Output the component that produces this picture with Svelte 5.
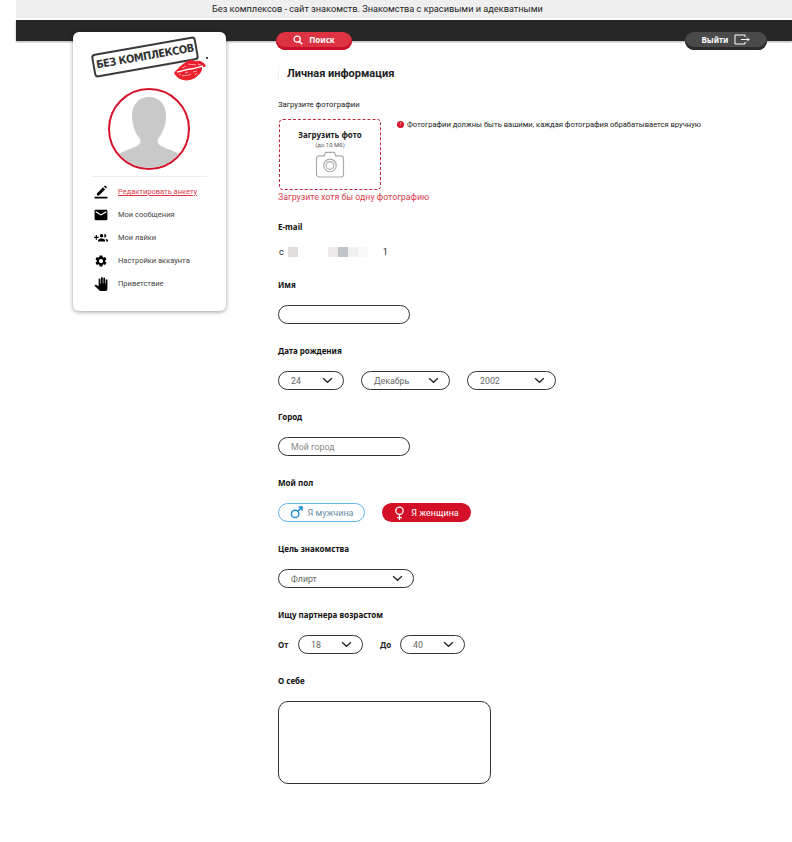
<script>
    const menu = [
        { label: "Редактировать анкету", icon: "edit", active: true },
        { label: "Мои сообщения", icon: "mail" },
        { label: "Мои лайки", icon: "group" },
        { label: "Настройки аккаунта", icon: "gear" },
        { label: "Приветствие", icon: "hand" },
    ];

    const paths = {
        edit: "M1 20h22v3H1zM5 14.500 15.500 4l3.500 3.500L8.500 18H5zM17 2.500l1.200-1.200a1 1 0 0 1 1.400 0l2.100 2.100a1 1 0 0 1 0 1.400L20.500 6z",
        mail: "M21 3H3C1.900 3 1 3.900 1 5v14c0 1.100.900 2 2 2h18c1.100 0 2-.900 2-2V5c0-1.100-.900-2-2-2zm0 4.500-9 5.500-9-5.500V5l9 5.500L21 5v2.500z",
        group: "M8 10H5V7H3v3H0v2h3v3h2v-3h3v-2zm10 1c1.660 0 2.990-1.340 2.990-3S19.660 5 18 5c-.320 0-.630.050-.910.140.570.810.900 1.790.900 2.860s-.340 2.040-.900 2.860c.280.090.590.140.910.140zm-5 0c1.660 0 2.990-1.340 2.990-3S14.660 5 13 5s-3 1.340-3 3 1.340 3 3 3zm6.620 2.160c.830.730 1.380 1.660 1.380 2.840v2h3v-2c0-1.540-2.370-2.490-4.380-2.840zM13 13c-2 0-6 1-6 3v2h12v-2c0-2-4-3-6-3z",
        gear: "M19.140 12.940c.040-.300.060-.610.060-.940 0-.320-.020-.640-.070-.940l2.030-1.580c.180-.140.230-.410.120-.610l-1.920-3.320c-.120-.220-.370-.290-.590-.220l-2.390.960c-.500-.380-1.030-.700-1.620-.940l-.360-2.540c-.040-.240-.240-.410-.480-.410h-3.840c-.240 0-.430.170-.470.410l-.360 2.540c-.590.240-1.130.570-1.620.940l-2.390-.960c-.220-.080-.470 0-.590.220L2.740 8.870c-.120.210-.080.470.120.610l2.030 1.580c-.050.300-.090.630-.090.940s.020.640.070.940l-2.030 1.580c-.180.140-.230.410-.120.610l1.920 3.320c.120.220.370.290.590.220l2.390-.960c.500.380 1.030.700 1.620.940l.360 2.540c.050.240.240.410.480.410h3.840c.240 0 .440-.170.470-.410l.360-2.540c.590-.240 1.130-.560 1.620-.940l2.390.960c.220.080.470 0 .590-.220l1.920-3.320c.120-.220.070-.470-.120-.610l-2.010-1.580zM12 15.600c-1.980 0-3.600-1.620-3.600-3.600s1.620-3.600 3.600-3.600 3.600 1.620 3.600 3.600-1.620 3.600-3.600 3.600z",
        hand: "M23 5.500V20c0 2.200-1.800 4-4 4h-7.300c-1.080 0-2.100-.430-2.850-1.190L1 14.830s1.260-1.230 1.300-1.250c.220-.190.490-.290.790-.290.220 0 .420.060.600.160.040.010 4.310 2.460 4.310 2.460V4c0-.830.670-1.500 1.500-1.500S11 3.170 11 4v7h1V1.500c0-.830.670-1.500 1.500-1.500S15 .670 15 1.500V11h1V2.500c0-.830.670-1.500 1.500-1.500s1.500.670 1.500 1.500V11h1V5.500c0-.830.670-1.500 1.500-1.500s1.500.670 1.500 1.500z",
    };

    const dates = [
        { value: "24", width: 66 },
        { value: "Декабрь", width: 89 },
        { value: "2002", width: 89 },
    ];
</script>

{#snippet chevron()}
    <svg class="chevron" viewBox="0 0 12 8"><path d="M1 1.500 6 6l5-4.500" fill="none" stroke="#222" stroke-width="1.500" /></svg>
{/snippet}

{#snippet select(value, width)}
    <div class="control select" style="width: {width}px">
        <span>{value}</span>
        {@render chevron()}
    </div>
{/snippet}

<div class="page">
    <div class="top-line">Без комплексов - сайт знакомств. Знакомства с красивыми и адекватными</div>
    <div class="dark-bar"></div>

    <div class="content">
        <aside class="card">
            <div class="logo">
                <div class="stamp">БЕЗ КОМПЛЕКСОВ</div>
                <svg class="lips" viewBox="0 0 34 23">
                    <path d="M1 15C5 10 11 4 17 2c3-1 4 2 6 1 4-1 8 1 10 5-1 1-2 1-4 1 1 4-3 8-7 11-5 3-11 3-15 1-2-1-5-4-6-6z" fill="#ee1f2d" />
                    <path d="M4 14c6-1 10-3 14-3s8-2 12-3" stroke="#fff" stroke-width="1.300" fill="none" />
                    <path d="M9 18c3-1 6 0 9-2M15 6c2 1 5 0 8 1M9 10l4-2M20 14l4-1M6 16l2 1M12 15l3-1M25 6l3 1M22 17l2-2" stroke="#ffc4c6" stroke-width="0.800" fill="none" />
                </svg>
                <span class="speck"></span>
            </div>
            <div class="avatar">
                <svg viewBox="0 0 78 78">
                    <path d="M39 7c11 0 17 8 17 19 0 10-4 18-8 23-1 3 0 5 3 7 6 3 15 5 21 10-7 7-20 12-33 12S13 73 6 66c6-5 15-7 21-10 3-2 4-4 3-7-4-5-8-13-8-23C22 15 28 7 39 7z" fill="#c9c9c9" />
                </svg>
            </div>
            <div class="divider"></div>
            <nav class="menu">
                {#each menu as item}
                    <div class="menu-item" class:active={item.active}>
                        <svg class="menu-icon" viewBox="0 0 24 24"><path d={paths[item.icon]} fill="#000" /></svg>
                        <span>{item.label}</span>
                    </div>
                {/each}
            </nav>
        </aside>

        <main class="main">
            <div class="actions">
                <button class="pill search">
                    <svg viewBox="0 0 14 14" width="10" height="10"><circle cx="5.800" cy="5.800" r="4.300" fill="none" stroke="#fff" stroke-width="1.800" /><path d="M9 9l4 4" stroke="#fff" stroke-width="2" /></svg>
                    Поиск
                </button>
                <button class="pill exit">
                    Выйти
                    <svg viewBox="0 0 16 11" width="16" height="11"><path d="M11 3V1H1v9h10V8" fill="none" stroke="#fff" stroke-width="1" /><path d="M7 5.500h8M13 3.500l2 2-2 2" fill="none" stroke="#fff" stroke-width="1" /></svg>
                </button>
            </div>

            <h1 class="title">Личная информация</h1>

            <div class="upload-label">Загрузите фотографии</div>
            <div class="upload-row">
                <div class="upload-box">
                    <div class="upload-title">Загрузить фото</div>
                    <div class="upload-hint">(до 10 Мб)</div>
                    <svg class="camera" viewBox="0 0 30 28">
                        <path d="M4 5h5l1.500-3.500h9L21 5h5a3 3 0 0 1 3 3v16a3 3 0 0 1-3 3H4a3 3 0 0 1-3-3V8a3 3 0 0 1 3-3z" fill="none" stroke="#aaa" stroke-width="1.200" />
                        <circle cx="15" cy="15" r="6.500" fill="none" stroke="#aaa" stroke-width="1.200" />
                        <circle cx="15" cy="15" r="4" fill="none" stroke="#aaa" stroke-width="1.200" />
                    </svg>
                </div>
                <div class="note"><span class="note-dot">!</span>Фотографии должны быть вашими, каждая фотография обрабатывается вручную</div>
            </div>
            <div class="error">Загрузите хотя бы одну фотографию</div>

            <div class="field email-field">
                <div class="label">E-mail</div>
                <div class="email">
                    <span>с</span>
                    <i class="blur b1"></i>
                    <i class="blur b2"></i>
                    <i class="blur b3"></i>
                    <i class="blur b4"></i>
                    <i class="blur b5"></i>
                    <span class="email-end">1</span>
                </div>
            </div>

            <div class="field">
                <div class="label">Имя</div>
                <div class="control" style="width: 132px"></div>
            </div>

            <div class="field">
                <div class="label">Дата рождения</div>
                <div class="row">
                    {#each dates as d}
                        {@render select(d.value, d.width)}
                    {/each}
                </div>
            </div>

            <div class="field">
                <div class="label">Город</div>
                <div class="control placeholder" style="width: 132px">Мой город</div>
            </div>

            <div class="field">
                <div class="label">Мой пол</div>
                <div class="row">
                    <div class="gender male">
                        <svg viewBox="0 0 14 14" width="13" height="13"><circle cx="5.500" cy="8.500" r="4" fill="none" stroke="#1c8fd6" stroke-width="1.600" /><path d="M8.500 5.500 13 1M9 1h4v4" fill="none" stroke="#1c8fd6" stroke-width="1.600" /></svg>
                        Я мужчина
                    </div>
                    <div class="gender female">
                        <svg viewBox="0 0 12 15" width="11" height="14"><circle cx="6" cy="5" r="4" fill="none" stroke="#fff" stroke-width="1.400" /><path d="M6 9v6M3.500 12.500h5" fill="none" stroke="#fff" stroke-width="1.400" /></svg>
                        Я женщина
                    </div>
                </div>
            </div>

            <div class="field">
                <div class="label">Цель знакомства</div>
                {@render select("Флирт", 136)}
            </div>

            <div class="field">
                <div class="label">Ищу партнера возрастом</div>
                <div class="row">
                    <div class="age"><b>От</b>{@render select("18", 65)}</div>
                    <div class="age"><b>До</b>{@render select("40", 65)}</div>
                </div>
            </div>

            <div class="field">
                <div class="label">О себе</div>
                <div class="textarea"></div>
            </div>
        </main>
    </div>
</div>

<style>
    :global(body) {
        background: #fff;
    }

    .page {
        height: 842px;
        overflow: hidden;
        font-family: Roboto, sans-serif;
        color: #222;
    }

    .top-line {
        margin-left: 16px;
        height: 18px;
        padding-left: 196px;
        background: #efefef;
        font-size: 9.200px;
        line-height: 17px;
        color: #222;
    }

    .dark-bar {
        margin: 2px 0 0 16px;
        height: 21px;
        background: #272727;
        box-shadow: 0 1px 2px rgba(0, 0, 0, 0.35);
    }

    .content {
        display: flex;
        margin-top: -9px;
        padding-left: 73px;
        position: relative;
    }

    .card {
        width: 153px;
        height: 279px;
        flex-shrink: 0;
        background: #fff;
        border-radius: 6px;
        box-shadow: 0 1px 4px rgba(0, 0, 0, 0.4);
        display: flex;
        flex-direction: column;
    }

    .logo {
        position: relative;
        width: 153px;
        height: 56px;
    }

    .stamp {
        position: absolute;
        left: 19px;
        top: 13px;
        width: 106px;
        height: 24px;
        box-sizing: border-box;
        border: 2px solid #3a3a3a;
        border-radius: 4px;
        transform: rotate(-10deg);
        font-family: "DejaVu Sans Condensed", "DejaVu Sans", sans-serif;
        font-weight: 700;
        font-size: 11px;
        letter-spacing: -0.500px;
        line-height: 20px;
        text-align: center;
        white-space: nowrap;
        color: #333;
    }

    .lips {
        position: absolute;
        left: 100px;
        top: 26px;
        width: 34px;
        height: 23px;
    }

    .speck {
        position: absolute;
        left: 133px;
        top: 25px;
        width: 2px;
        height: 2px;
        background: #444;
    }

    .avatar {
        width: 82px;
        height: 82px;
        margin-left: 35px;
        box-sizing: border-box;
        border: 2px solid #d4142a;
        border-radius: 50%;
        overflow: hidden;
    }

    .avatar svg {
        display: block;
        width: 78px;
        height: 78px;
    }

    .divider {
        width: 115px;
        height: 1px;
        margin: 6px 0 0 19px;
        background: #eee;
    }

    .menu {
        width: 100%;
        margin-top: 3px;
    }

    .menu-item {
        height: 23px;
        padding-left: 21px;
        display: flex;
        align-items: center;
        gap: 10px;
        font-size: 7.500px;
        color: #444;
    }

    .menu-item.active {
        color: #e0394a;
        text-decoration: underline;
    }

    .menu-icon {
        width: 14px;
        height: 14px;
        flex-shrink: 0;
    }

    .main {
        width: 489px;
        margin-left: 52px;
    }

    .actions {
        display: flex;
        justify-content: space-between;
        margin-left: -2px;
    }

    .pill {
        height: 18px;
        border: 0;
        border-radius: 9px;
        color: #fff;
        font: 700 8px "Noto Sans", sans-serif;
        display: flex;
        align-items: center;
        justify-content: center;
        gap: 6px;
        padding: 0 0 3px;
    }

    .search {
        width: 76px;
        background: #dc3242;
        box-shadow: inset 0 -3px 0 #c8102a;
    }

    .exit {
        width: 82px;
        background: #4a4a4a;
        box-shadow: inset 0 -3px 0 #2b2b2b;
    }

    .title {
        margin: 16px 0 0;
        padding-left: 8px;
        font-size: 11px;
        line-height: 16px;
        font-weight: 700;
        color: #222;
        border-left: 1px solid #f2f2f2;
    }

    .upload-label {
        margin-top: 17px;
        font-size: 7.700px;
        line-height: 12px;
    }

    .upload-row {
        display: flex;
        margin-top: 8px;
        padding-left: 1px;
    }

    .upload-box {
        width: 102px;
        height: 71px;
        box-sizing: border-box;
        border: 1px dashed #c02a40;
        border-radius: 4px;
        padding-top: 9px;
        display: flex;
        flex-direction: column;
        align-items: center;
        flex-shrink: 0;
    }

    .upload-title {
        font-family: "Noto Sans", sans-serif;
        font-size: 8px;
        line-height: 12px;
        font-weight: 700;
    }

    .upload-hint {
        font-size: 6px;
        line-height: 7px;
        color: #555;
    }

    .camera {
        width: 30px;
        height: 27px;
        margin-top: 3px;
    }

    .note {
        margin-left: 16px;
        font-size: 7.600px;
        line-height: 12px;
        white-space: nowrap;
        display: flex;
        align-items: flex-start;
    }

    .note-dot {
        width: 7px;
        height: 7px;
        margin: 2px 3px 0 0;
        border-radius: 50%;
        background: #d4142a;
        color: #fff;
        font-size: 5px;
        line-height: 7px;
        text-align: center;
    }

    .error {
        margin-top: 1px;
        font-size: 8.800px;
        line-height: 13px;
        color: #d8404e;
    }

    .field {
        margin-top: 21px;
    }

    .email-field {
        margin-top: 17px;
    }

    .label {
        font-family: "Noto Sans", sans-serif;
        font-size: 8px;
        line-height: 12px;
        font-weight: 700;
        color: #111;
        margin-bottom: 14px;
    }

    .email {
        height: 11px;
        font-size: 9px;
        line-height: 11px;
        display: flex;
        padding-left: 1px;
    }

    .blur {
        display: block;
        width: 10px;
        height: 10px;
    }

    .b1 {
        margin-left: 4px;
        background: #e0dedc;
    }

    .b2 {
        margin-left: 30px;
        background: #eceaea;
    }

    .b3 {
        background: #c0c4c8;
    }

    .b4 {
        background: #f0f0f0;
    }

    .b5 {
        background: #f8f8f8;
    }

    .email-end {
        margin-left: 15px;
    }

    .control {
        height: 19px;
        box-sizing: border-box;
        border: 1px solid #333;
        border-radius: 10px;
        padding: 1px 8px 0 12px;
        font-size: 8.800px;
        line-height: 17px;
        color: #666;
    }

    .placeholder {
        color: #888;
    }

    .select {
        display: flex;
        align-items: center;
        justify-content: space-between;
    }

    .chevron {
        width: 11px;
        height: 7px;
        margin: -2px 2px 0 0;
    }

    .row {
        display: flex;
        gap: 17px;
        align-items: center;
    }

    .gender {
        height: 19px;
        width: 87px;
        box-sizing: border-box;
        border-radius: 10px;
        display: flex;
        align-items: center;
        justify-content: center;
        gap: 5px;
        font-size: 9px;
    }

    .male {
        border: 1px solid #5eb4ea;
        color: #6a8ea8;
    }

    .female {
        width: 89px;
        gap: 6px;
        background: #d31027;
        color: #fff;
    }

    .age {
        display: flex;
        align-items: center;
        gap: 10px;
        font-family: "Noto Sans", sans-serif;
        font-size: 8px;
    }

    .age b {
        width: 10px;
        white-space: nowrap;
    }

    .age .control {
        font-family: Roboto, sans-serif;
    }

    .textarea {
        width: 213px;
        height: 83px;
        box-sizing: border-box;
        border: 1px solid #333;
        border-radius: 10px;
    }
</style>
